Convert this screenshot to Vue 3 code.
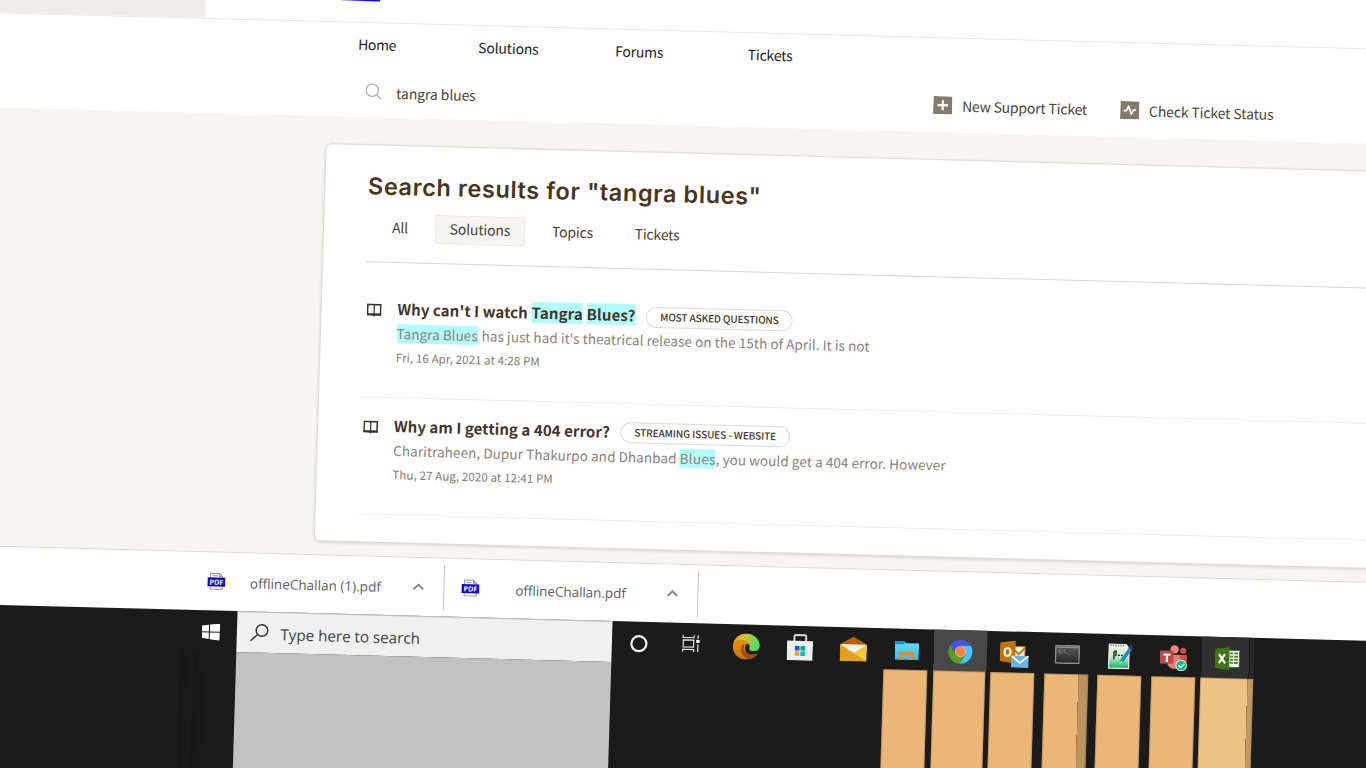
<script setup>
const nav = [
  { label: 'Home', w: 38, gap: 82 },
  { label: 'Solutions', w: 60.5, gap: 76.5 },
  { label: 'Forums', w: 48, gap: 84.5 },
  { label: 'Tickets', w: 45, gap: 0 },
]
const tabs = [
  { label: 'All', w: 16 },
  { label: 'Solutions', w: 60.5, active: true },
  { label: 'Topics', w: 41 },
  { label: 'Tickets', w: 45 },
]
const results = [
  {
    title: [{ t: "Why can't I watch", w: 130.5 }, { t: 'Tangra', w: 51.5, hit: true }, { t: 'Blues?', w: 49, hit: true }],
    tag: 'MOST ASKED QUESTIONS', tagW: 118.5,
    desc: [{ t: 'Tangra Blues', w: 81, hit: true, gap: 4 }, { t: "has just had it's theatrical release on the 15th of April. It is not", w: 388 }],
    date: 'Fri, 16 Apr, 2021 at 4:28 PM', dateW: 144,
  },
  {
    title: [{ t: 'Why am I getting a 404 error?', w: 216 }],
    tag: 'STREAMING ISSUES - WEBSITE', tagW: 141.5,
    desc: [
      { t: 'Charitraheen, Dupur Thakurpo and Dhanbad', w: 283.5, gap: 3 },
      { t: 'Blues', w: 36, hit: true },
      { t: ', you would get a 404 error. However', w: 230 },
    ],
    date: 'Thu, 27 Aug, 2020 at 12:41 PM', dateW: 160.5,
  },
]
const downloads = [
  { name: 'offlineChallan (1).pdf', w: 131, cls: 'first' },
  { name: 'offlineChallan.pdf', w: 110.5, cls: 'second' },
]
const strips = ['', '', '', '', '', 'on', 'wide', 'on', 'on split', 'on', 'on', 'wide excel']

/* Spreads a label's letters so that it takes exactly the given width. */
const vFit = {
  mounted(el, { value }) {
    const natural = parseFloat(getComputedStyle(el).width)
    el.style.letterSpacing = (value - natural) / el.textContent.length + 'px'
  },
}
</script>

<template>
  <div class="viewport">
    <div class="screen">
      <div class="top">
        <div class="top-side"></div>
        <div class="brand"></div>
      </div>

      <header class="header">
        <nav class="nav">
          <span v-for="n in nav" :key="n.label" v-fit="n.w" class="t" :style="{ marginRight: n.gap + 'px' }">{{ n.label }}</span>
        </nav>
        <div class="tools">
          <div class="search">
            <svg width="17" height="17" viewBox="0 0 17 17" fill="none" stroke="#b3b0b3" stroke-width="1.3"><circle cx="7" cy="7" r="6.1" /><path d="M11.4 11.4 16 15.6" /></svg>
            <span v-fit="79.5" class="t">tangra blues</span>
          </div>
          <div class="action a1">
            <svg width="19" height="18" viewBox="0 0 19 18"><rect width="19" height="18" rx="1" fill="#86796e" /><path d="M9.5 4v10M4.3 9h10.4" stroke="#fff" stroke-width="2.2" /></svg>
            <span v-fit="125" class="t">New Support Ticket</span>
          </div>
          <div class="action a2">
            <svg width="19" height="18" viewBox="0 0 19 18"><rect width="19" height="18" rx="1" fill="#86796e" /><path d="M3.5 9.5h2.7L8.2 5l3 8 1.8-4.2h2.8" fill="none" stroke="#fff" stroke-width="1.7" stroke-linejoin="round" /></svg>
            <span v-fit="124.5" class="t">Check Ticket Status</span>
          </div>
        </div>
      </header>

      <main class="page">
        <section class="card">
          <h1><span v-fit="393.5" class="t">Search results for "tangra blues"</span></h1>
          <div class="tabs">
            <div v-for="t in tabs" :key="t.label" class="tab" :class="{ active: t.active }"><span v-fit="t.w" class="t">{{ t.label }}</span></div>
          </div>
          <article v-for="r in results" :key="r.tag" class="result">
            <svg class="book" width="15" height="14" viewBox="0 0 15 14"><path d="M1 1h6l.5.6L8 1h6v10H1z" fill="#fff" stroke="#3d3128" stroke-width="1.5" /><path d="M7.5 1.5v10" stroke="#3d3128" stroke-width="1.2" /><path d="M.3 9.900h14.400v2.100H8.700L7.500 13.200l-1.200-1.200H.3z" fill="#3d3128" /></svg>
            <div class="body">
              <div class="title">
                <span v-for="p in r.title" :key="p.t" v-fit="p.w" class="t" :class="{ hit: p.hit }">{{ p.t }}</span>
                <span class="tag"><span v-fit="r.tagW" class="t">{{ r.tag }}</span></span>
              </div>
              <div class="desc">
                <span v-for="p in r.desc" :key="p.t" v-fit="p.w" class="t" :class="{ hit: p.hit }" :style="{ marginRight: (p.gap || 0) + 'px' }">{{ p.t }}</span>
              </div>
              <div class="date"><span v-fit="r.dateW" class="t">{{ r.date }}</span></div>
            </div>
          </article>
        </section>
      </main>

      <div class="shelf">
        <div v-for="d in downloads" :key="d.name" class="download" :class="d.cls">
          <svg width="18" height="18" viewBox="0 0 18 18">
            <path d="M3 5V1h9l3 3v2M3 12v4.6h12V12M12 1v3h3M5 3.3h5" fill="none" stroke="#9c9c9c" stroke-width="1.1" />
            <rect y="5" width="18" height="9" fill="#1800dc" />
            <text x="9" y="12.3" text-anchor="middle" font-family="Open Sans, sans-serif" font-weight="700" font-size="7.2" fill="#fff">PDF</text>
          </svg>
          <span v-fit="d.w" class="t name">{{ d.name }}</span>
          <svg width="12" height="8" viewBox="0 0 12 8"><path d="M1.2 6.5 6 1.8l4.8 4.7" fill="none" stroke="#808080" stroke-width="1.8" /></svg>
          <i class="sep"></i>
        </div>
      </div>

      <footer class="taskbar">
        <div class="start">
          <svg width="18" height="17" viewBox="0 0 18 17" fill="#fff"><path d="M0 2.4 7 1.4V8H0zM8 1.2 18 0v8H8zM0 9h7v6.6l-7-1zM8 9h10v8L8 15.8z" /></svg>
        </div>
        <div class="find">
          <svg width="19" height="18" viewBox="0 0 19 18" fill="none" stroke="#333" stroke-width="1.5"><circle cx="12" cy="6.7" r="5.8" /><path d="M7.8 10.8.8 17.2" /></svg>
          <span v-fit="139.5" class="t">Type here to search</span>
        </div>
        <div class="apps">
          <div class="app"><svg width="20" height="20" viewBox="0 0 20 20"><circle cx="10" cy="10" r="7.5" fill="none" stroke="#f2f2f2" stroke-width="2.2" /></svg></div>
          <div class="app view"><svg width="19" height="17" viewBox="0 0 19 17" fill="none" stroke="#e8e8e8" stroke-width="1.2"><path d="M1 0v2.6h11V0M1 17v-2.6h11V17M1.3 5h10.4v7H1.3zM16 0v3.5M16 9v8" /><path d="M14.2 4.6h3.4v3h-3.4z" fill="#fff" stroke="none" /></svg></div>
          <div class="app">
            <svg width="27" height="26" viewBox="0 0 27 26">
              <defs>
                <linearGradient id="e1" x1="0" y1="0" x2="1" y2=".35"><stop offset="0" stop-color="#e9a11c" /><stop offset=".45" stop-color="#cfc52f" /><stop offset="1" stop-color="#4cdd68" /></linearGradient>
                <linearGradient id="e2" x1="0" y1="0" x2="0" y2="1"><stop offset="0" stop-color="#ed9c17" /><stop offset="1" stop-color="#c97208" /></linearGradient>
              </defs>
              <path d="M0 13C0 5.500 6 0 13.500 0c5 0 9 3 9 8l-5 4c-.5 6 4 7.500 8.500 6C24 22.500 19 26 13.500 26 6 26 0 20.500 0 13z" fill="url(#e2)" />
              <path d="M1 9C4 1 12-1.600 19 1.300c6 2.600 8.600 8 7.600 12.400-1 3.700-5 4.800-9 3.800-2.700-.8-1.900-2.100-1.100-3.200C18 11 15 7.300 10.500 6.800 6 6.400 2.500 7.500 1 9z" fill="url(#e1)" />
              <path d="M9 12c-2.300 6 1 12.500 8 13.600 4-.8 7-3.200 9-7.100-5 2.500-12.600 2.100-14.600-1.800C10.400 15 10.800 13 12 11.200c-1.200-.4-2.400 0-3 .8z" fill="#9a520b" />
              <path d="M13.500 10.500c2.500-.6 4 1 3 3.400-.5 1.400 0 2.600 1.600 3.200 3 1 6.500.2 8.600-2.100.4 2-.2 3.500-1.400 4.500-4.500 2-11 1.500-12.600-2.300-1-2.700-.5-5.500.8-6.700z" fill="#1b1b1b" />
            </svg>
          </div>
          <div class="app">
            <svg width="26" height="27" viewBox="0 0 26 27"><path d="M7.300 8V2.500c0-.7.4-1.200 1.200-1.200h9.300c.8 0 1.200.5 1.200 1.200V8" fill="none" stroke="#d9d9d9" stroke-width="2" /><path d="M0 7h26v19.500H0z" fill="#eee" /><path d="M8 12h4.600v4.600H8z" fill="#214fe4" /><path d="M13.600 12h4.700v4.600h-4.700z" fill="#00b67d" /><path d="M8 17.500h4.600V22H8z" fill="#f3a800" /><path d="M13.600 17.500h4.700V22h-4.700z" fill="#05b5fa" /></svg>
          </div>
          <div class="app">
            <svg width="27" height="25" viewBox="0 0 27 25"><path d="M0 8 13.500.5 27 8v3H0z" fill="#b96006" /><path d="M1.500 8h24v9h-24z" fill="#f0f0f3" /><path d="M27 8v17L12 18z" fill="#f4c838" /><path d="M0 8l27 17H0z" fill="#e4a01f" /></svg>
          </div>
          <div class="app">
            <svg width="24" height="20" viewBox="0 0 24 20"><defs><linearGradient id="f" x2="0" y2="1"><stop stop-color="#6ad8fd" /><stop offset="1" stop-color="#38bdf2" /></linearGradient></defs><path d="M0 .5h9.500l1.500 2H24V19H0z" fill="url(#f)" /><path d="M0 .5h9.500l1 1.600L9 3.500H0z" fill="#0793cf" /><path d="M4.500 19v-6c0-1.200.8-2 2-2h11c1.200 0 2 .8 2 2v6h-4.500v-4H9v4z" fill="#d0913f" /></svg>
          </div>
          <div class="app chrome">
            <svg width="25" height="25" viewBox="0 0 25 25"><circle cx="12.500" cy="12.500" r="12" fill="#4654df" /><path d="M2.100 6.500A12 12 0 0 0 12.500 24.500l5-9L7.500 15z" fill="#5a9d1d" /><path d="M12.300 24.500A12 12 0 0 0 22.900 6.500H13l4.700 9z" fill="#41cafb" /><circle cx="12.500" cy="12.500" r="5.600" fill="#d9b9b0" /><circle cx="12.500" cy="12.500" r="4.900" fill="#f4853c" /></svg>
          </div>
          <div class="app low">
            <svg width="29" height="27" viewBox="0 0 29 27"><path d="M14 6h11v12H14z" fill="#fff" stroke="#c96e04" stroke-width="1" /><path d="m15 10 4 3.500L25 7" fill="none" stroke="#c96e04" stroke-width="2" /><path d="M0 2.200 15.500 0v23L0 20.700z" fill="#c77200" /><ellipse cx="7.600" cy="11.600" rx="3" ry="4" fill="none" stroke="#fff" stroke-width="2.200" /><path d="M11.500 15H29v12H11.500z" fill="#6eb1e9" /><path d="m12 15.500 8.200 6.700 8.300-6.700" fill="none" stroke="#fff" stroke-width="1.700" /></svg>
          </div>
          <div class="app">
            <svg width="25" height="19" viewBox="0 0 25 19"><defs><linearGradient id="c" x2="0" y2="1"><stop stop-color="#5d5d5d" /><stop offset="1" stop-color="#252525" /></linearGradient></defs><rect x=".7" y=".7" width="23.600" height="17.600" fill="url(#c)" stroke="#8c8c8c" stroke-width="1.400" /><path d="M1.500 2.500h22" stroke="#999" stroke-width="1" /><text x="3.500" y="8.500" font-family="Liberation Sans, sans-serif" font-size="5.500" fill="#a0a0a0">C:\._</text></svg>
          </div>
          <div class="app">
            <svg width="25" height="26" viewBox="0 0 25 26"><defs><linearGradient id="n" x2="0" y2="1"><stop stop-color="#f2f2ea" /><stop offset=".5" stop-color="#c9edcf" /><stop offset="1" stop-color="#0cba60" /></linearGradient></defs><path d="M1 1h17l3 4v20H1z" fill="url(#n)" stroke="#eee" stroke-width="1.200" /><path d="M2 2.200h14" stroke="#8e8e75" stroke-width="1.500" stroke-dasharray="1.500 1" /><path d="M6 8v8M8 8v5M6 8h3M10 12h2M13 12h2" stroke="#223a31" stroke-width="1.500" /><path d="m13.500 18.500 9-14" stroke="#168cd0" stroke-width="3.500" /><path d="m21.500 5 2.500-4" stroke="#303574" stroke-width="3" /><path d="m12.500 20 .8-2.500 1.600 1z" fill="#f0e5cc" /></svg>
          </div>
          <div class="app teams">
            <svg width="28" height="26" viewBox="0 0 28 26"><circle cx="14.500" cy="4.600" r="4.200" fill="#ee8782" /><circle cx="23" cy="5.800" r="3" fill="#ce514d" /><path d="M20 10h7v7c-1 4-5 5-8 3z" fill="#cd504d" /><path d="M8 10h12.500v9.500c-1 6-10 6.500-12.500.5z" fill="#ea7c77" /><path d="M0 6h13.500v13H0z" fill="#b94a4a" /><path d="M3.500 9h7v2H8v6.500H6V11H3.500z" fill="#fff" /><circle cx="21.500" cy="20.500" r="5.300" fill="#10b887" stroke="#d4f0e3" stroke-width="1" /><path d="m18.700 20.300 2.200 2.300 3.700-4" fill="none" stroke="#fff" stroke-width="1.400" /></svg>
          </div>
          <div class="app excel-app">
            <svg width="25" height="23" viewBox="0 0 25 23"><path d="M13 3h11.500v17H13z" fill="#fff" stroke="#3f741c" stroke-width="1" /><path d="M15 5h8v2h-8zm0 3.200h8v2h-8zm0 3.200h8v2h-8zm0 3.200h8v2h-8z" fill="#538434" /><path d="M18.700 4v15" stroke="#fff" stroke-width="1" /><path d="M0 2 14.500 0v23L0 20.800z" fill="#40741b" /><path d="m4 7.200 6.300 9M10 7l-6 9.200" stroke="#fff" stroke-width="2.100" /></svg>
          </div>
        </div>
      </footer>

      <div class="below">
        <div class="below-start"></div>
        <div class="below-find"></div>
        <div class="strips">
          <div v-for="(s, i) in strips" :key="i" class="slot"><div class="strip" :class="s"></div></div>
        </div>
      </div>
    </div>
  </div>
</template>

<style>
body { background: #fff; overflow: hidden; }
</style>

<style scoped>
.viewport { width: 1366px; height: 768px; overflow: hidden; background: #fff; }
.screen {
  width: 1460px; height: 830px; display: flex; flex-direction: column;
  transform-origin: 0 0; transform: matrix(1, 0.0263, -0.03, 1, 0.9, -40.6);
  font-family: "Noto Sans CJK SC", "Noto Sans CJK JP", "Open Sans", sans-serif;
  font-size: 14px; color: #4a3f36; box-sizing: border-box;
}
.screen * { box-sizing: border-box; }
.screen > * { flex-shrink: 0; }
.t { display: inline-block; white-space: nowrap; flex-shrink: 0; }

.top { height: 53px; display: flex; background: #fff; margin-left: -30px; padding-left: 30px; }
.top-side { width: 205.500px; background: #f0ecea; margin-left: -30px; padding-right: 30px; box-sizing: content-box; }
.brand { width: 38px; height: 32px; margin-left: 136px; background: linear-gradient(90deg, rgba(10, 10, 245, .4), #0a0af5 24px); }

.header { height: 95px; border-top: 1px solid #eae8e6; background: #fff; }
.nav { height: 42.600px; padding-left: 359.500px; display: flex; align-items: center; color: #1e1d20; line-height: 20px; }
.tools { height: 50.900px; padding-left: 368px; display: flex; align-items: center; line-height: 20px; color: #4f4237; }
.search { width: 568px; display: flex; align-items: center; gap: 14px; padding-top: 2px; }
.search svg { margin-top: -2px; }
.action { display: flex; align-items: center; gap: 9.800px; margin-bottom: 3px; }
.a2 { margin-left: 33.200px; }

.page { height: 438.300px; background: #f6f5f1; padding: 27.300px 0 0 329.700px; }
.card { height: 397.700px; background: #fff; border: 1px solid #e0dbd8; border-radius: 6px; box-shadow: 0 1px 3px rgba(80, 60, 50, .18); padding: 24px 0 0 42.900px; }
h1 { margin: 0; height: 33px; line-height: 33px; font-family: Inter, "Open Sans", sans-serif; font-weight: 600; font-size: 23.500px; color: #49341e; }
.tabs { margin-top: 11px; height: 48.500px; padding: 0 0 19.200px 10.300px; border-bottom: 1px solid #d7d5d3; display: flex; gap: 11.700px; }
.tab { height: 28.700px; padding: 0 15px; line-height: 27.500px; }
.tab.active { background: #f6f5f2; box-shadow: inset 0 0 0 1px #eceae6; border-radius: 2px; }
.result { display: flex; gap: 15.900px; padding: 16.500px 0 0 2.200px; height: 116.400px; border-bottom: 1px solid #ecebe9; }
.tabs + .result { height: 135.600px; padding-top: 35.500px; }
.book { margin-top: 6px; flex-shrink: 0; }
.title { display: flex; align-items: center; gap: 3.600px; height: 21px; line-height: 21px; font-weight: 700; font-size: 15px; color: #43352a; }
.hit { background: #b2fdfb; }
.tag { margin: 3px 0 0 6.800px; height: 21px; padding: 0 13.200px; border: 1px solid #dfdbd5; border-radius: 11px; font-size: 10px; line-height: 18px; flex-shrink: 0; font-weight: 500; }
.tag .t { vertical-align: top; }
.desc { display: flex; margin-top: 5px; height: 19px; line-height: 19px; font-size: 13.500px; color: #8b8178; }
.date { margin-top: 6px; height: 17px; line-height: 17px; font-size: 11.500px; color: #83786e; }

.shelf { height: 59px; border-top: 1px solid #ddd8d6; background: #fff; display: flex; font-family: "Open Sans", "Noto Sans", sans-serif; color: #5d6064; font-size: 13.500px; }
.download { display: flex; align-items: center; height: 57.500px; flex-shrink: 0; }
.download svg { flex-shrink: 0; }
.first { padding-left: 225px; }
.first .name { margin: 1.500px 31.300px 0 24.500px; }
.second { padding-left: 17.500px; }
.second .name { margin: 1.500px 40.300px 0 35.500px; }
.sep { width: 1px; height: 45px; background: #c4c4c4; margin-left: 19.200px; }

.taskbar { height: 41.500px; display: flex; background: #1b1b1b; }
.start { width: 256px; height: 42px; padding-left: 220.500px; display: flex; align-items: center; flex-shrink: 0; }
.find { width: 375px; flex-shrink: 0; background: #f0f0f0; border-top: 1px solid #bcbcbc; padding-left: 12.500px; display: flex; align-items: center; gap: 12px; color: #414141; font-family: "Open Sans", "Noto Sans", sans-serif; font-size: 15.300px; }
.find svg { margin-top: -2px; }
.find .t { margin-top: 1px; }
.apps { display: flex; flex: 1; height: 41.500px; }
.app { width: 53.500px; height: 41.500px; flex-shrink: 0; display: flex; align-items: center; justify-content: center; }
.app svg { margin: 1px 0 0 1px; }
.app:first-child svg { margin: 1px 0 0; }
.view svg { margin: 0 2px 1px 0; }
.low svg { margin: 3px 0 0 3px; }
.teams svg { margin: 2px 0 0 1px; }
.chrome { background: linear-gradient(90deg, transparent 1px, #484848 1px); }
.excel-app { background: linear-gradient(90deg, transparent 1px, #303030 1px, #303030 48px, #171717 48px, #171717 49px, #292929 49px); }

.below { flex: 1; display: flex; background: #1b1b1b; margin-top: -1px; }
.below-start { width: 256px; flex-shrink: 0; background: linear-gradient(90deg, transparent 200px, rgba(0, 0, 0, .12) 200px, rgba(0, 0, 0, 0) 212px, rgba(0, 0, 0, .14) 214px, transparent 230px); }
.below-find { width: 375px; flex-shrink: 0; background: #c2c2c2; }
.strips { display: flex; }
.slot { width: 53.500px; flex-shrink: 0; display: flex; justify-content: center; }
.strip { width: 44px; }
.on { background: #ebb776; box-shadow: inset 0 0 0 1px rgba(120, 80, 35, .3); }
.split { background: linear-gradient(90deg, #ebb776 34px, #967446 34px, #bb945e 35px); }
.wide { width: 52.500px; background: #ebb776; box-shadow: inset 0 0 0 1px rgba(120, 80, 35, .25); }
.excel { background: linear-gradient(90deg, #eec285 47px, #967446 47px, #bf9a65 48px); }
</style>
